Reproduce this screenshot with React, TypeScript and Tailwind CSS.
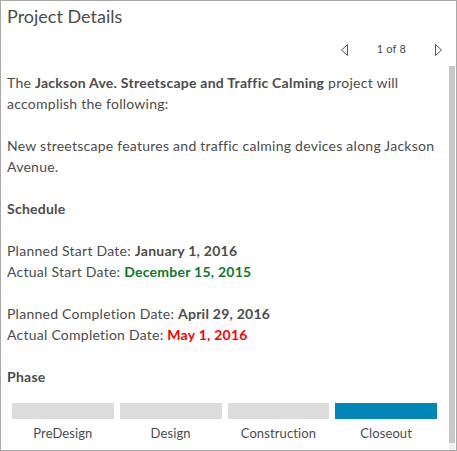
import React from 'react'

type Phase = {
  name: string
  active: boolean
}

const phases: Phase[] = [
  { name: 'PreDesign', active: false },
  { name: 'Design', active: false },
  { name: 'Construction', active: false },
  { name: 'Closeout', active: true },
]

function Arrow({ dir }: { dir: 'left' | 'right' }) {
  const points = dir === 'left' ? '6.5,0.5 0.5,6 6.5,11.5' : '0.5,0.5 6.5,6 0.5,11.5'
  return (
    <svg width="7" height="12" viewBox="0 0 7 12" className="block">
      <polygon points={points} fill="none" stroke="#555" strokeWidth="1" />
    </svg>
  )
}

function Pager() {
  return (
    <div className="flex items-center justify-end h-[20px] pr-[7px] text-[#4c4c4c]">
      <button className="w-[7px]">
        <Arrow dir="left" />
      </button>
      <span className="text-[11px] tracking-[0.2px] mx-[29px] -mt-[3px]">1 of 8</span>
      <button className="w-[7px]">
        <Arrow dir="right" />
      </button>
    </div>
  )
}

function PhaseBar() {
  return (
    <div className="grid grid-cols-4 gap-x-[6px] pl-[5px] pr-[12px] mt-[16px]">
      {phases.map((p) => (
        <div key={p.name} className="flex flex-col items-center">
          <div className={p.active ? 'w-full h-[16px] bg-[#0087ba]' : 'w-full h-[16px] bg-[#dcdcdc]'} />
          <div className="text-[13px] leading-[20px] tracking-[0.1px] mt-[4px]">{p.name}</div>
        </div>
      ))}
    </div>
  )
}

export default function App() {
  return (
    <div
      className="w-[457px] h-[451px] border border-[#a9a9a9] bg-white flex flex-col overflow-hidden text-[#4c4c4c]"
      style={{ fontFamily: 'Lato, "Noto Sans", sans-serif' }}
    >
      <h1 className="px-[6px] pt-[3px] text-[18px] leading-[24px] font-normal">Project Details</h1>

      <div className="flex flex-1 min-h-0">
        <div className="flex-1 pl-[6px] pt-[12px] text-[14px] leading-[21px] tracking-[0.25px]">
          <Pager />

          <div className="mt-[12px]">
            <p>
              <span>The </span>
              <b>Jackson Ave. Streetscape and Traffic Calming</b>
              <span> project will accomplish the following:</span>
            </p>
            <p className="mt-[21px]">New streetscape features and traffic calming devices along Jackson Avenue.</p>

            <p className="mt-[21px] font-bold">Schedule</p>
            <p className="mt-[21px]">
              Planned Start Date: <b>January 1, 2016</b>
              <br />
              Actual Start Date: <b className="text-[#0b7a2e]">December 15, 2015</b>
            </p>
            <p className="mt-[21px]">
              Planned Completion Date: <b>April 29, 2016</b>
              <br />
              Actual Completion Date: <b className="text-[#ff0000]">May 1, 2016</b>
            </p>

            <p className="mt-[21px] font-bold">Phase</p>
          </div>

          <PhaseBar />
        </div>

        {/* scrollbar */}
        <div className="w-[7px] flex flex-col pt-[38px] pr-[1px]">
          <div className="flex-1 bg-[#c8c8c8]" />
          <div className="h-[7px] bg-[#f0f0f0]" />
        </div>
      </div>
    </div>
  )
}
